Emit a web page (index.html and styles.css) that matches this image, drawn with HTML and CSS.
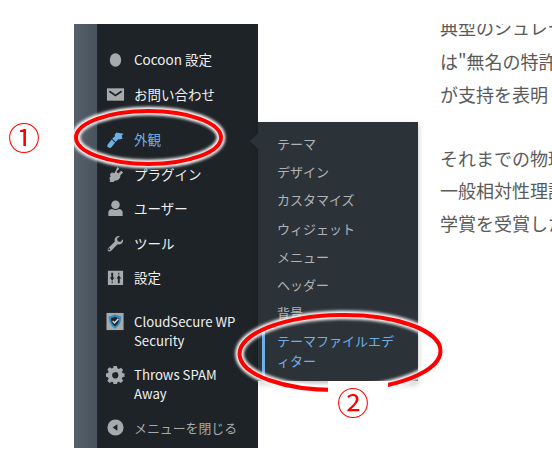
FILE: index.html
```html
<!DOCTYPE html>
<html lang="ja">
<head>
<meta charset="utf-8">
<title>外観メニュー</title>
<link rel="stylesheet" href="styles.css">
</head>
<body>
<div class="stage">
  <div class="strip"></div>
  <nav class="sidebar">
    <ul class="group">
      <li class="item">
        <svg class="icon" viewBox="0 0 20 20"><ellipse cx="10" cy="10.500" rx="6" ry="7"/></svg>
        <span>Cocoon 設定</span>
      </li>
      <li class="item">
        <svg class="icon" viewBox="0 0 20 20"><rect x="1" y="3.500" width="18" height="13"/><path d="M3.500 6.500L10 11l6.500-4.500" fill="none" stroke="#1d2327" stroke-width="1.800"/></svg>
        <span>お問い合わせ</span>
      </li>
    </ul>
    <ul class="group">
      <li class="item current">
        <svg class="icon" viewBox="0 0 20 20"><path d="M11 2.500l7.500 1.500-2 2 1 3-3 1-1-.5L10 12.500 6.500 9l3-2.500L9 5zM6 10l3.500 3.500-4 5c-1 .8-3 .3-3.800-.5-.6-1-.4-2.200.3-3z"/></svg>
        <span>外観</span>
      </li>
      <li class="item">
        <svg class="icon" viewBox="0 0 20 20"><path d="M12 2l2 2-3 3 2 2 3-3 2 2-3 3c.5 2-1 4-3 5l-3 .5-1 1.500L3 18l1.500-1-1-3.500 1.500-1.500-1-2 2-2 3 .5z"/></svg>
        <span>プラグイン</span>
      </li>
      <li class="item">
        <svg class="icon" viewBox="0 0 20 20"><circle cx="10" cy="6" r="4.500"/><path d="M2.500 18v-4c0-2 2-3.500 4-3.500 2 1.500 5 1.500 7 0 2 0 4 1.500 4 3.500v4z"/></svg>
        <span>ユーザー</span>
      </li>
      <li class="item">
        <svg class="icon" viewBox="0 0 20 20"><path fill-rule="evenodd" d="M17.800 5.500c.6 2-.2 4-2 5-1.200.6-2.500.6-3.600.2L5.500 17.600c-1 1-2.500 1-3.200.2-.8-.8-.7-2.200.2-3.100L9.300 7.900c-.4-1.200-.3-2.600.4-3.700 1-1.700 3-2.500 5-2L11.600 5l.7 2.700 2.700.7zM4 15.200a1 1 0 1 0 0 1.600 1 1 0 0 0 0-1.600z"/></svg>
        <span>ツール</span>
      </li>
      <li class="item">
        <svg class="icon" viewBox="0 0 20 20"><path fill-rule="evenodd" d="M2 3h16v15H2zM5.500 5v5H4l2.500 3.500L9 10H7.500V5zM6 14v2h1v-2zM13 5v2h1V5zM13.500 7.500L11 11h1.500v5h2v-5H16z"/></svg>
        <span>設定</span>
      </li>
    </ul>
    <ul class="group group-plugins">
      <li class="item">
        <svg class="icon" viewBox="0 0 20 20"><rect x="0.500" y="1" width="18" height="18" fill="#a7aaad"/><path d="M9.500 2.500l6.500 2.200c.2 5.500-1.800 10-6.500 12.800C4.800 14.700 2.800 10.200 3 4.700z" fill="#2f8cc4"/><path d="M9.500 5l4.200 1.500c0 3.600-1.200 6.600-4.200 8.500-3-1.900-4.200-4.900-4.200-8.500z" fill="#1d2327"/><path d="M7 9.500l2 2 4-4.500" fill="none" stroke="#d8dadb" stroke-width="1.600"/></svg>
        <span>CloudSecure WP<br>Security</span>
      </li>
      <li class="item">
        <svg class="icon" viewBox="0 0 20 20"><path fill-rule="evenodd" d="M8 1h3.500l.5 2.500 1.500.7 2.200-1.400 2.400 2.400L16.700 7l.6 1.500 2.200.5v3.400l-2.200.5-.6 1.600 1.400 2.100-2.400 2.400-2.200-1.400-1.500.6-.5 2.300H8l-.5-2.300-1.600-.6-2.100 1.400-2.400-2.400 1.400-2.100-.7-1.600L0 12.400V9l2.100-.5.700-1.500-1.400-2.200 2.400-2.400 2.100 1.400 1.600-.7zM9.700 7.500a3.300 3.300 0 1 0 .1 6.600 3.300 3.300 0 0 0-.1-6.600z"/></svg>
        <span>Throws SPAM<br>Away</span>
      </li>
      <li class="item muted">
        <svg class="icon" viewBox="0 0 20 20"><path fill-rule="evenodd" d="M10 1.500a8.500 8.500 0 1 1 0 17 8.500 8.500 0 0 1 0-17zM12 6.500L7 10l5 3.500z"/></svg>
        <span>メニューを閉じる</span>
      </li>
    </ul>
  </nav>
  <main class="article">
    <p>典型のシュレデ<br>は"無名の特許<br>が支持を表明し</p>
    <p>それまでの物理<br>一般相対性理論<br>学賞を受賞した</p>
  </main>

  <div class="flyout">
    <ul class="submenu">
      <li>テーマ</li>
      <li>デザイン</li>
      <li>カスタマイズ</li>
      <li>ウィジェット</li>
      <li>メニュー</li>
      <li>ヘッダー</li>
      <li>背景</li>
      <li class="active">テーマファイルエディター</li>
    </ul>
  </div>

  <svg class="marks" viewBox="0 0 552 467">
    <defs><filter id="glow" x="-10%" y="-20%" width="120%" height="140%"><feGaussianBlur stdDeviation="1.600"/></filter></defs>
    <g class="halo" filter="url(#glow)">
      <ellipse cx="148.500" cy="137.500" rx="72.500" ry="26.500"/>
      <ellipse cx="340" cy="352.500" rx="100.500" ry="37.500" transform="rotate(-1 340 352.500)"/>
    </g>
    <g class="ring">
      <ellipse cx="148.500" cy="137.500" rx="72.500" ry="26.500"/>
      <ellipse cx="340" cy="352.500" rx="100.500" ry="37.500" transform="rotate(-1 340 352.500)"/>
    </g>
  </svg>
  <div class="callout callout-one">①</div>
  <div class="callout callout-two">②</div>
</div>
</body>
</html>
```
FILE: styles.css
```css
* { box-sizing: border-box; }
html, body { margin: 0; padding: 0; background: #fff; }
body { font-family: "Noto Sans CJK JP", "Noto Sans", sans-serif; overflow: hidden; }
ul { list-style: none; margin: 0; padding: 0; }

.stage {
  position: relative;
  width: 552px;
  height: 467px;
  padding: 24px 0 19px 74px;
  display: flex;
  overflow: hidden;
}
.strip {
  flex: none;
  width: 23px;
  background: linear-gradient(90deg, #56616d, #47525c);
}
.sidebar {
  flex: none;
  width: 161px;
  background: #1d2327;
  padding-top: 18.500px;
  display: flex;
  flex-direction: column;
  border-left: 1px solid #23292e;
}
.group + .group { margin-top: 11.500px; }
.group + .group-plugins { margin-top: 10px; }
.item {
  display: flex;
  align-items: flex-start;
  gap: 9px;
  padding: 7.700px 0 7.700px 8px;
  font-size: 13.500px;
  line-height: 19px;
  color: #f0f0f1;
  white-space: nowrap;
}
.group-plugins .item { padding-top: 7.500px; padding-bottom: 7.500px; font-size: 13.200px; }
.icon {
  width: 19px;
  height: 19px;
  flex: none;
  fill: #a7aaad;
}
.current, .current .icon { color: #72aee6; fill: #72aee6; }
.group-plugins .muted { color: #a7aaad; font-size: 12.900px; }

.article {
  flex: none;
  margin-left: 182px;
  margin-top: -15.300px;
  font-size: 18px;
  line-height: 32.300px;
  color: #5a5a5a;
  white-space: nowrap;
  clip-path: inset(15.300px -200px -200px 0);
}
.article p { margin: 0 0 32.300px; }
.article p:first-child::first-line { line-height: 36.600px; }

.flyout {
  position: absolute;
  left: 258px;
  top: 122px;
  width: 160px;
  height: 259px;
  background: #2c3338;
  box-shadow: 0 3px 6px rgba(0, 0, 0, .25);
  padding-top: 8px;
}
.flyout::before {
  content: "";
  position: absolute;
  left: -8px;
  top: 11px;
  border: 8px solid transparent;
  border-left: 0;
  border-right-color: #2c3338;
}
.submenu li {
  padding: 4.100px 12px 4.100px 19px;
  font-size: 13px;
  line-height: 20px;
  color: #b0b3b6;
}
.submenu .active {
  color: #72aee6;
  position: relative;
}
.submenu .active::before {
  content: "";
  position: absolute;
  left: 4px;
  top: 4px;
  bottom: -6px;
  width: 3px;
  background: #72aee6;
}

.marks {
  position: absolute;
  left: 0;
  top: 0;
  width: 552px;
  height: 467px;
  pointer-events: none;
}
.marks ellipse { fill: none; }
.halo ellipse { stroke: #fff; stroke-width: 8.500; }
.ring ellipse { stroke: #f00; stroke-width: 4; }

.callout {
  position: absolute;
  color: #f00;
  font-size: 32px;
  line-height: 40px;
  text-align: center;
  background: #fff;
}
.callout-one { left: 7px; top: 116px; width: 34px; height: 40px; }
.callout-two { left: 328px; top: 381px; width: 60px; height: 44px; padding-right: 10px; }
```
